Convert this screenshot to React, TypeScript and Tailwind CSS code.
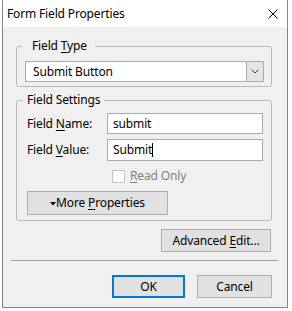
import React from "react";

const font = { fontFamily: '"Noto Sans", "Segoe UI", sans-serif' };

function U({ children }: { children: React.ReactNode }) {
  return <span className="underline underline-offset-[2px] decoration-1">{children}</span>;
}

export default function App() {
  return (
    <div className="w-[292px] h-[311px] bg-white text-[12px] leading-[16px] text-black tracking-[-0.15px]" style={font}>
      <div className="ml-[2px] w-[286px] h-[308px] border-l border-r border-b border-[#858585] bg-[#f0f0f0] flex flex-col">
        {/* title bar */}
        <div className="h-[27px] bg-white flex items-center justify-between pl-[4px] pr-[9px]">
          <span className="text-[12px]">Form Field Properties</span>
          <svg width="10" height="10" viewBox="0 0 10 10" className="mt-[1px]">
            <path d="M0.5 0.5 L9.5 9.5 M9.5 0.5 L0.5 9.5" stroke="#000" strokeWidth="1" fill="none" />
          </svg>
        </div>

        {/* Field Type group */}
        <fieldset className="mt-[11px] ml-[13px] w-[256px] border border-[#b9b9b9] rounded-[3px] px-0 pb-[4px]">
          <legend className="ml-[5px] pl-[10px] pr-[8px] leading-[16px]">
            Field <U>T</U>ype
          </legend>
          <div className="pl-[8px] pr-[7px]">
            <div className="mt-[7px] h-[21px] bg-white border border-[#acacac] flex items-stretch">
              <div className="flex-1 pl-[7px] flex items-center">Submit Button</div>
              <div className="w-[17px] bg-[#e5e5e5] border-l border-[#acacac] flex items-center justify-center">
                <svg width="8" height="5" viewBox="0 0 8 5">
                  <path d="M0.5 0.5 L4 4 L7.5 0.5" stroke="#404040" strokeWidth="1" fill="none" />
                </svg>
              </div>
            </div>
          </div>
        </fieldset>

        {/* Field Settings group */}
        <fieldset className="mt-[5px] ml-[13px] w-[256px] border border-[#b9b9b9] rounded-[3px] px-0 pb-[5px]">
          <legend className="ml-[6px] px-[4px] leading-[16px]">Field Settings</legend>
          <div className="pl-[10px] pr-[8px]">
            <div className="mt-[5px] flex items-center">
              <div className="w-[80px]">
                Field <U>N</U>ame:
              </div>
              <div className="w-[156px] h-[21px] bg-white border border-[#acacac] pl-[5px] flex items-center">submit</div>
            </div>
            <div className="mt-[5px] flex items-center">
              <div className="w-[80px]">
                Field <U>V</U>alue:
              </div>
              <div className="w-[156px] h-[22px] bg-white border border-[#acacac] pl-[5px] flex items-center">
                Submit<span className="inline-block w-[1px] h-[14px] bg-black" />
              </div>
            </div>
            <div className="mt-[7px] ml-[85px] flex items-center gap-[5px] text-[#838383]">
              <div className="w-[13px] h-[13px] bg-white border border-[#c4c4c4]" />
              <span>
                <U>R</U>ead Only
              </span>
            </div>
            <button className="mt-[7px] w-[141px] h-[24px] bg-[#e1e1e1] border border-[#adadad] flex items-center justify-center">
              <svg width="6" height="4" viewBox="0 0 6 4" className="mt-[1px]">
                <path d="M0 0 L6 0 L3 3.5 Z" fill="#000" />
              </svg>
              <span>
                More <U>P</U>roperties
              </span>
            </button>
          </div>
        </fieldset>

        <div className="mt-[8px] flex justify-end pr-[16px]">
          <button className="w-[110px] h-[23px] bg-[#e1e1e1] border border-[#adadad] flex items-center justify-center">
            <span>
              Advanced <U>E</U>dit...
            </span>
          </button>
        </div>

        <div className="mt-[8px] ml-[8px] w-[267px] h-[1px] bg-[#a0a0a0]" />

        <div className="mt-[14px] flex justify-end gap-[12px] pr-[15px]">
          <button className="w-[73px] h-[23px] bg-[#e1e1e1] border-2 border-[#0078d7] flex items-center justify-center">
            OK
          </button>
          <button className="w-[75px] h-[23px] bg-[#e1e1e1] border border-[#adadad] flex items-center justify-center">
            Cancel
          </button>
        </div>
      </div>
    </div>
  );
}
